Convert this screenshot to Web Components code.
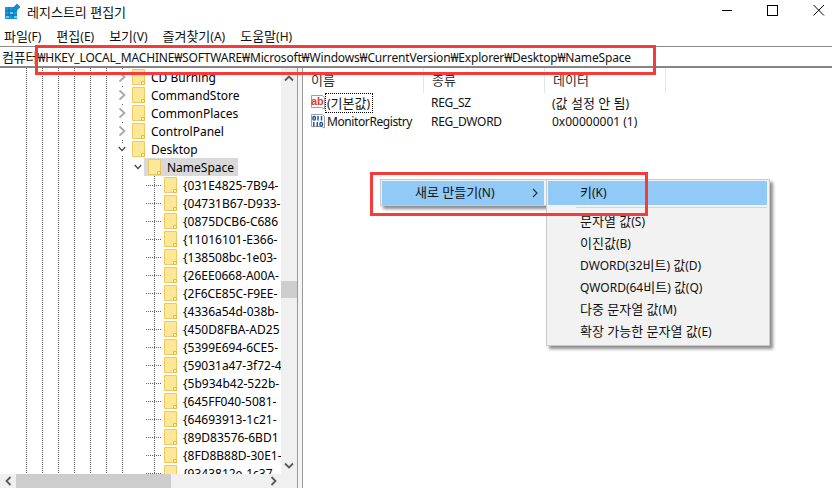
<!DOCTYPE html>
<html lang="ko">
<head>
<meta charset="utf-8">
<title>레지스트리 편집기</title>
<style>
  html, body { margin: 0; height: 100%; background: #fff; overflow: hidden; }
  body { font: 12px "Noto Sans", "Noto Sans CJK KR", sans-serif; color: #000; }
</style>
</head>
<body>
<reg-app></reg-app>

<script>
const FONT = '"Noto Sans", "Noto Sans CJK KR", sans-serif';

// hangul is a size bigger than latin in the original
const ko = s => s.replace(/[가-힣]+( [가-힣]+)*/g, m => `<span class="k">${m}</span>`);

// folder used all over the tree
const FOLDER = `<svg width="13" height="16" viewBox="0 0 13 16">
  <path d="M.5.5h12v15H.5z" fill="#fee797" stroke="#eeca62"/>
  <path d="M9.5 15.5v-3h3v3z" fill="#fff3c4" stroke="#e8b93c"/>
</svg>`;

class TitleBar extends HTMLElement {
    constructor() {
        super();
        this.attachShadow({ mode: "open" });
        this.shadowRoot.innerHTML = `
        <style>
            :host { display: flex; align-items: center; height: 22px; padding: 0 0 2px 5px; flex: none; }
            .name { margin-left: 6px; color: #111; }
            .btns { margin-left: auto; display: flex; }
            .btns svg { width: 46px; height: 22px; display: block; }
        </style>
        <svg width="16" height="15" viewBox="0 0 16 15">
            <rect x="0" y="3" width="12" height="12" fill="#1a9ae0"/>
            <path d="M4 3v12M8 3v12M0 7h12M0 11h12" stroke="#0b6fb5" stroke-width="1"/>
            <rect x="1" y="12" width="3" height="2" fill="#5fd0f8"/>
            <rect x="5" y="8" width="3" height="2" fill="#5fd0f8"/>
            <rect x="9" y="12" width="3" height="2" fill="#5fd0f8"/>
            <path d="M12 0l3 3-3 3-3-3z" fill="#1a8fd0" stroke="#0b6fb5" stroke-width=".6"/>
        </svg>
        <span class="name"><slot></slot></span>
        <div class="btns">
            <svg viewBox="0 0 46 22"><path d="M28 10.5h10" stroke="#000"/></svg>
            <svg viewBox="0 0 46 22"><rect x="27.5" y="5.5" width="10" height="10" fill="none" stroke="#000"/></svg>
            <svg viewBox="0 0 46 22"><path d="M27.5 5l10.5 10.5M38 5L27.5 15.5" stroke="#000" fill="none"/></svg>
        </div>
        `;
    }
}
customElements.define("title-bar", TitleBar);

class MenuBar extends HTMLElement {
    constructor() {
        super();
        this.attachShadow({ mode: "open" });
        this.shadowRoot.innerHTML = `
        <style>
            :host { display: flex; align-items: center; box-sizing: border-box; height: 22px; flex: none; gap: 15px; padding-left: 4px; color: #111; }
        </style>
        <slot></slot>
        `;
    }
}
customElements.define("menu-bar", MenuBar);

class AddressBar extends HTMLElement {
    constructor() {
        super();
        this.attachShadow({ mode: "open" });
        this.shadowRoot.innerHTML = `
        <style>
            :host { display: flex; align-items: center; height: 19px; flex: none; padding-left: 2px; letter-spacing: -.17px;
                border-top: 1px solid #8a8a8a; border-bottom: 2px solid #858585; white-space: nowrap; color: #111; }
            div { white-space: pre; }
        </style>
        <div><slot></slot></div>
        `;
    }
}
customElements.define("address-bar", AddressBar);

class TreeRow extends HTMLElement {
    constructor() {
        super();
        this.attachShadow({ mode: "open" });
        const depth = Number(this.getAttribute("depth") || 0);
        const kind = this.getAttribute("kind") || "leaf";
        let arrow = "";
        if (kind == "closed") arrow = `<svg class="arr" width="8" height="12" viewBox="0 0 8 12"><path d="M1.5 1.5L6.5 6 1.5 10.5" fill="none" stroke="#a6a6a6" stroke-width="1.7"/></svg>`;
        if (kind == "open") arrow = `<svg class="arr" width="10" height="8" viewBox="0 0 10 8"><path d="M1 1.5L5 6 9 1.5" fill="none" stroke="#404040" stroke-width="1.6"/></svg>`;
        this.shadowRoot.innerHTML = `
        <style>
            :host { display: flex; align-items: center; height: 18px; white-space: nowrap; padding-left: ${114 + depth * 16}px; }
            .exp { width: 16px; height: 18px; flex: none; display: flex; align-items: center; justify-content: center; }
            .arr { background: #fff; padding: 2px 4px; }
            :host([kind="leaf"]) .exp {
                background:
                    linear-gradient(#666 50%, transparent 50%) 8px 0 / 1px 2px repeat-y,
                    linear-gradient(90deg, #666 50%, transparent 50%) 8px 9px / 2px 1px repeat-x;
            }
            .lab { display: flex; align-items: center; height: 18px; margin-left: -2px; padding: 0 4px; }
            :host([selected]) .lab { background: #d9d9d9; }
            .lab svg { display: block; margin-right: 6px; flex: none; }
        </style>
        <div class="exp">${arrow}</div>
        <div class="lab">${FOLDER}<slot></slot></div>
        `;
    }
}
customElements.define("tree-row", TreeRow);

class ScrollV extends HTMLElement {
    constructor() {
        super();
        this.attachShadow({ mode: "open" });
        this.shadowRoot.innerHTML = `
        <style>
            :host { display: block; position: absolute; right: 0; top: 0; bottom: 14px; width: 16px; background: #f0f0f0; }
            .t { position: absolute; left: 0; width: 16px; top: 213px; height: 17px; background: #cdcdcd; }
            svg { position: absolute; left: 3px; }
        </style>
        <svg style="top:7px" width="10" height="7" viewBox="0 0 10 7"><path d="M1 5.5L5 1.5 9 5.5" fill="none" stroke="#5a5a5a" stroke-width="1.8"/></svg>
        <div class="t"></div>
        <svg style="bottom:5px" width="10" height="7" viewBox="0 0 10 7"><path d="M1 1.5L5 5.5 9 1.5" fill="none" stroke="#5a5a5a" stroke-width="1.8"/></svg>
        `;
    }
}
customElements.define("scroll-v", ScrollV);

class ScrollH extends HTMLElement {
    constructor() {
        super();
        this.attachShadow({ mode: "open" });
        this.shadowRoot.innerHTML = `
        <style>
            :host { display: flex; align-items: center; position: absolute; left: 0; right: 0; bottom: 0; height: 14px; background: #f0f0f0; }
            .b { width: 16px; flex: none; display: flex; justify-content: center; }
            .t { width: 155px; height: 14px; background: #cdcdcd; flex: none; }
            .sp { flex: 1; }
        </style>
        <div class="b"><svg width="7" height="10" viewBox="0 0 7 10"><path d="M5.5 1L1.5 5 5.5 9" fill="none" stroke="#5a5a5a" stroke-width="1.8"/></svg></div>
        <div class="t"></div>
        <div class="sp"></div>
        <div class="b" style="margin-right:16px"><svg width="7" height="10" viewBox="0 0 7 10"><path d="M1.5 1L5.5 5 1.5 9" fill="none" stroke="#5a5a5a" stroke-width="1.8"/></svg></div>
        `;
    }
}
customElements.define("scroll-h", ScrollH);

class TreeView extends HTMLElement {
    constructor() {
        super();
        this.attachShadow({ mode: "open" });
        const dots = [26, 42, 58, 74, 90, 106, 122]
            .map(x => `linear-gradient(#666 50%, transparent 50%) ${x}px 0 / 1px 2px repeat-y`).join(",");
        this.shadowRoot.innerHTML = `
        <style>
            :host { display: block; position: relative; width: 297px; flex: none; overflow: hidden; }
            .rows { width: 281px; height: 406px; overflow: hidden; background: ${dots}; }
        </style>
        <div class="rows"><slot></slot></div>
        <scroll-v></scroll-v>
        <scroll-h></scroll-h>
        `;
    }
}
customElements.define("tree-view", TreeView);

class ListRow extends HTMLElement {
    constructor() {
        super();
        this.attachShadow({ mode: "open" });
        const doc = `<path d="M1.5.5h11l2 2v11.5l-3-1.5H1.5z" fill="#fff" stroke="#9aa0a8"/>`;
        const icon = this.getAttribute("icon") == "sz"
            ? doc + `<text x="1" y="10" font-family="Liberation Sans" font-size="11" font-weight="700" fill="#d8452c">ab</text>`
            : doc + `<g fill="none" stroke="#1a4f9c" stroke-width="1.4">
                <rect x="3" y="2.5" width="2.4" height="3.6" rx="1"/><path d="M8 2v4.6M11.5 2v4.6"/>
                <path d="M3.8 8v4.4M7.3 8v4.4"/><rect x="10" y="8.4" width="2.4" height="3.6" rx="1"/>
              </g>`;
        this.shadowRoot.innerHTML = `
        <style>
            :host { display: grid; grid-template-columns: 121px 121px auto; box-sizing: border-box; height: 18px; align-items: center; padding-left: 7px; white-space: nowrap; color: #111; }
            :host(:not([focused])) { padding-top: 2px; }
            .n { display: flex; align-items: center; }
            svg { flex: none; margin-right: 1px; }
            .txt { padding: 0 1px; letter-spacing: -.4px; }
            .ty { letter-spacing: -.3px; }
            :host([focused]) .txt { outline: 1px dotted #000; height: 18px; line-height: 18px; padding: 0 2px 0 1px; letter-spacing: 0; }
        </style>
        <div class="n"><svg width="15" height="15" viewBox="0 0 15 15">${icon}</svg><span class="txt"><slot name="name"></slot></span></div>
        <div class="ty"><slot name="type"></slot></div>
        <div><slot name="data"></slot></div>
        `;
    }
}
customElements.define("list-row", ListRow);

class ListView extends HTMLElement {
    constructor() {
        super();
        this.attachShadow({ mode: "open" });
        this.shadowRoot.innerHTML = `
        <style>
            :host { display: block; flex: 1; min-width: 0; border-left: 1px solid #9a9a9a; }
            .head { display: grid; grid-template-columns: 121px 121px 121px; height: 25px; color: #333; }
            .head div { border-right: 1px solid #e5e5e5; padding: 2px 0 0 8px; box-sizing: border-box; line-height: 21px; font-size: 13px; }
        </style>
        <div class="head"><div>이름</div><div>종류</div><div>데이터</div></div>
        <slot></slot>
        `;
    }
}
customElements.define("list-view", ListView);

class MenuItem extends HTMLElement {
    constructor() {
        super();
        this.attachShadow({ mode: "open" });
        this.shadowRoot.innerHTML = `
        <style>
            :host { display: flex; align-items: center; box-sizing: border-box; height: 22px; padding: 0 0 4px var(--item-pad, 32px); color: #111; white-space: pre; }
            :host([active]) { height: 24px; background: #91c9f7; }
            svg { margin-left: auto; margin-right: 6px; position: relative; top: 2px; }
        </style>
        <div><slot></slot></div>
        ${this.hasAttribute("sub") ? `<svg width="6" height="10" viewBox="0 0 6 10"><path d="M1 1l4 4-4 4" fill="none" stroke="#333" stroke-width="1.2"/></svg>` : ""}
        `;
    }
}
customElements.define("menu-item", MenuItem);

class ContextMenu extends HTMLElement {
    constructor() {
        super();
        this.attachShadow({ mode: "open" });
        this.shadowRoot.innerHTML = `
        <style>
            :host { display: block; position: absolute; box-sizing: border-box; padding: 1px 2px 1px 1px; background: #f2f2f2;
                border: 1px solid #c9c9c9; box-shadow: 3px 3px 3px rgba(0,0,0,.45); }
            ::slotted(hr) { margin: 2px 0 3px 28px; border: 0; border-top: 1px solid #d4d4d4; }
        </style>
        <slot></slot>
        `;
    }
}
customElements.define("context-menu", ContextMenu);

class MarkBox extends HTMLElement {
    constructor() {
        super();
        this.attachShadow({ mode: "open" });
        this.shadowRoot.innerHTML = `
        <style>
            :host { display: block; position: absolute; box-sizing: border-box; border: 3px solid #f63b3b; pointer-events: none; }
        </style>
        `;
    }
}
customElements.define("mark-box", MarkBox);

class RegApp extends HTMLElement {
    constructor() {
        super();
        this.attachShadow({ mode: "open" });
        const closed = ["CD Burning", "CommandStore", "CommonPlaces", "ControlPanel"];
        const keys = ["{031E4825-7B94-", "{04731B67-D933-", "{0875DCB6-C686", "{11016101-E366-",
            "{138508bc-1e03-", "{26EE0668-A00A-", "{2F6CE85C-F9EE-", "{4336a54d-038b-",
            "{450D8FBA-AD25", "{5399E694-6CE5-", "{59031a47-3f72-4", "{5b934b42-522b-",
            "{645FF040-5081-", "{64693913-1c21-", "{89D83576-6BD1", "{8FD8B88D-30E1-",
            "{9343812e-1c37-"];
        const subs = ["문자열 값(S)", "이진값(B)", "DWORD(32비트) 값(D)", "QWORD(64비트) 값(Q)", "다중 문자열 값(M)", "확장 가능한 문자열 값(E)"];
        this.shadowRoot.innerHTML = `
        <style>
            :host { display: flex; flex-direction: column; position: relative; width: 832px; height: 488px; overflow: hidden;
                font: 12px ${FONT}; background: #fff; }
            .panes { display: flex; flex: 1; min-height: 0; }
            .split { width: 5px; flex: none; box-sizing: border-box; border-left: 1px solid #9a9a9a; background: #f4f4f4; }
            span { white-space: nowrap; }
            .k { font-size: 13px; }
            #m1 { left: 380px; top: 179px; width: 167px; height: 27px; --item-pad: 33px; }
            #m2 { left: 546px; top: 179px; width: 224px; height: 167px; --item-pad: 32px; }
        </style>
        <title-bar>${ko("레지스트리 편집기")}</title-bar>
        <menu-bar>${["파일(F)", "편집(E)", "보기(V)", "즐겨찾기(A)", "도움말(H)"].map(m => `<span>${ko(m)}</span>`).join("")}</menu-bar>
        <address-bar>${ko("컴퓨터")}₩HKEY_LOCAL_MACHINE₩SOFTWARE₩Microsoft₩Windows₩CurrentVersion₩Explorer₩Desktop₩NameSpace</address-bar>
        <div class="panes">
            <tree-view>
                ${closed.map(n => `<tree-row kind="closed" depth="0">${n}</tree-row>`).join("")}
                <tree-row kind="open" depth="0">Desktop</tree-row>
                <tree-row kind="open" depth="1" selected>NameSpace</tree-row>
                ${keys.map(k => `<tree-row kind="leaf" depth="2">${k}</tree-row>`).join("")}
            </tree-view>
            <div class="split"></div>
            <list-view>
                <list-row icon="sz" focused><span slot="name">(${ko("기본값")})</span><span slot="type">REG_SZ</span><span slot="data">(${ko("값 설정 안 됨")})</span></list-row>
                <list-row icon="bin"><span slot="name">MonitorRegistry</span><span slot="type">REG_DWORD</span><span slot="data">0x00000001 (1)</span></list-row>
            </list-view>
        </div>
        <context-menu id="m1"><menu-item active sub>${ko("새로 만들기")}(N)</menu-item></context-menu>
        <context-menu id="m2">
            <menu-item active>${ko("키")}(K)</menu-item>
            <hr>
            ${subs.map(s => `<menu-item>${ko(s)}</menu-item>`).join("")}
        </context-menu>
        <mark-box style="left:35px;top:45px;width:621px;height:30px"></mark-box>
        <mark-box style="left:370px;top:172px;width:278px;height:44px"></mark-box>
        `;
    }
}
customElements.define("reg-app", RegApp);
</script>
</body>
</html>
